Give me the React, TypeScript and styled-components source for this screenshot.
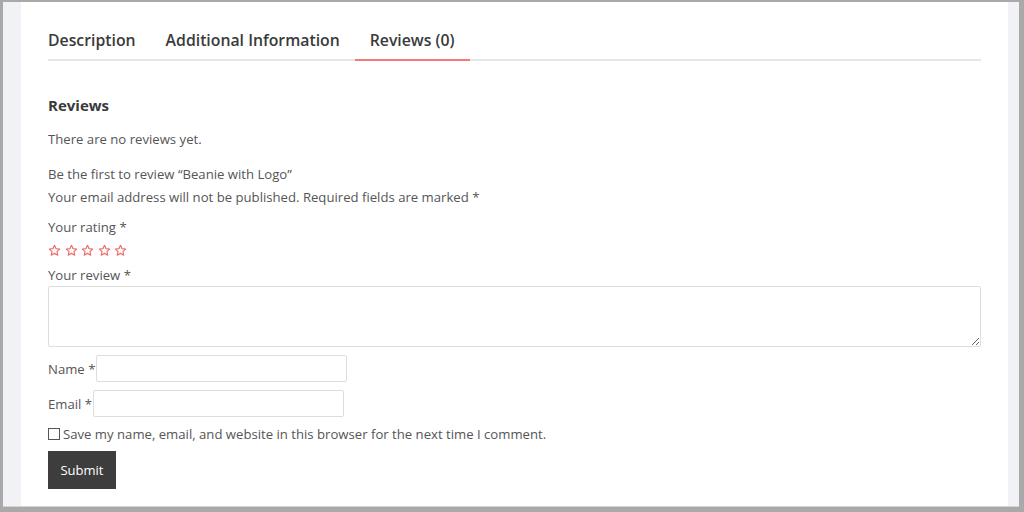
import styled, { createGlobalStyle } from "styled-components";

const GlobalStyle = createGlobalStyle`
  html, body {
    margin: 0;
    padding: 0;
    background: #ffffff;
  }
  * {
    box-sizing: border-box;
  }
`;

const Frame = styled.div`
  width: 1024px;
  height: 512px;
  border-style: solid;
  border-color: #a9a9a9;
  border-width: 2px 5px 5px 3px;
  background: #f1f2f6;
  padding: 0 11px 1px 18px;
  box-shadow: inset 0 -1px 0 #d2d2d2;
  display: flex;
  flex-direction: column;
  font-family: "Open Sans", "Liberation Sans", sans-serif;
`;

const Content = styled.div`
  flex: 1;
  background: #ffffff;
  padding: 28px 27px 0 27px;
`;

const TabList = styled.ul`
  display: flex;
  list-style: none;
  margin: 0;
  padding: 0;
  border-bottom: 2px solid #e6e6e6;
`;

const Tab = styled.li<{ $active?: boolean; $first?: boolean }>`
  padding: 0 15px 9px ${(p) => (p.$first ? "0" : "15px")};
  margin-bottom: -2px;
  border-bottom: 2px solid ${(p) => (p.$active ? "#f27a7a" : "transparent")};
  font-size: 15.8px;
  line-height: 20px;
  font-weight: 600;
  color: #3a3a3a;
`;

const Heading = styled.h2`
  margin: 34px 0 0;
  font-size: 15px;
  line-height: 20px;
  font-weight: 700;
  color: #3a3a3a;
`;

const Text = styled.p<{ $top: number }>`
  margin: ${(p) => p.$top}px 0 0;
  font-size: 13.15px;
  line-height: 20px;
  color: #555555;
`;

const Stars = styled.div`
  display: flex;
  gap: 3.5px;
  margin-top: 7px;
  height: 13px;
`;

const Label = styled.label<{ $top: number }>`
  display: block;
  margin-top: ${(p) => p.$top}px;
  font-size: 13.15px;
  line-height: 20px;
  color: #555555;
`;

const ReviewBox = styled.textarea`
  display: block;
  width: 100%;
  height: 61px;
  margin-top: 1px;
  border: 1px solid #dddddd;
  border-radius: 2px;
  background: #ffffff;
  font-family: inherit;
  outline: none;
`;

const FieldRow = styled.div<{ $top: number }>`
  display: flex;
  align-items: center;
  margin-top: ${(p) => p.$top}px;
  font-size: 13.15px;
  color: #555555;
`;

const FieldInput = styled.input`
  width: 251px;
  height: 27px;
  margin-left: 1px;
  border: 1px solid #dddddd;
  border-radius: 2px;
  outline: none;
  background: #ffffff;
`;

const CheckRow = styled.label`
  display: flex;
  align-items: center;
  gap: 3px;
  margin-top: 7px;
  height: 20px;
  font-size: 13.15px;
  color: #555555;
`;

const CheckBox = styled.span`
  width: 12px;
  height: 12px;
  border: 1px solid #555555;
  background: #ffffff;
`;

const SubmitButton = styled.button`
  display: block;
  margin-top: 7px;
  width: 68px;
  height: 38px;
  border: none;
  border-radius: 0;
  background: #3d3d3d;
  color: #ffffff;
  font-family: inherit;
  font-size: 13px;
  font-weight: 500;
`;

function Star() {
  return (
    <svg width="13" height="13" viewBox="0 0 24 24" fill="none" stroke="#ea7070" strokeWidth="2.2" strokeLinejoin="round">
      <polygon points="12,2.5 14.9,8.7 21.6,9.4 16.6,14 18,20.7 12,17.3 6,20.7 7.4,14 2.4,9.4 9.1,8.7" />
    </svg>
  );
}

export default function App() {
  return (
    <>
      <GlobalStyle />
      <Frame>
        <Content>
          <TabList>
            <Tab $first>Description</Tab>
            <Tab>Additional Information</Tab>
            <Tab $active>Reviews (0)</Tab>
          </TabList>
          <Heading>Reviews</Heading>
          <Text $top={14}>There are no reviews yet.</Text>
          <Text $top={15}>Be the first to review “Beanie with Logo”</Text>
          <Text $top={3}>Your email address will not be published. Required fields are marked *</Text>
          <Label $top={10}>Your rating *</Label>
          <Stars>
            {[0, 1, 2, 3, 4].map((i) => (
              <Star key={i} />
            ))}
          </Stars>
          <Label $top={8}>Your review *</Label>
          <ReviewBox />
          <FieldRow $top={8}>
            Name *<FieldInput type="text" />
          </FieldRow>
          <FieldRow $top={8}>
            Email *<FieldInput type="email" />
          </FieldRow>
          <CheckRow>
            <CheckBox />
            Save my name, email, and website in this browser for the next time I comment.
          </CheckRow>
          <SubmitButton>Submit</SubmitButton>
        </Content>
      </Frame>
    </>
  );
}
